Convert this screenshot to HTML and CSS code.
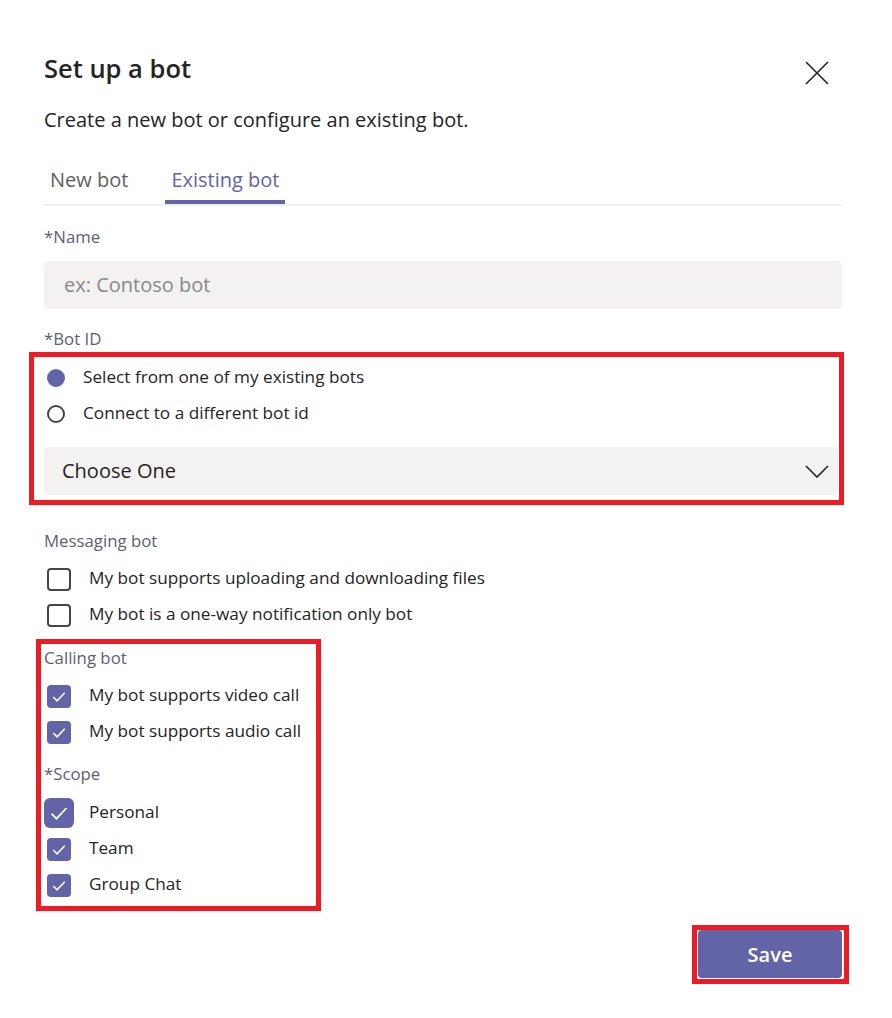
FILE: index.html
```html
<!DOCTYPE html>
<html lang="en">
<head>
<meta charset="utf-8">
<title>Set up a bot</title>
<link rel="stylesheet" href="styles.css">
</head>
<body>
<div class="dialog">
  <div class="header">
    <h1 class="title">Set up a bot</h1>
    <button class="close" aria-label="Close">
      <svg width="24" height="24" viewBox="0 0 24 24"><path d="M1 1 L23 23 M23 1 L1 23" stroke="#252424" stroke-width="1.6" fill="none"/></svg>
    </button>
  </div>
  <p class="subtitle">Create a new bot or configure an existing bot.</p>

  <div class="tabs">
    <div class="tab">New bot</div>
    <div class="tab active">Existing bot</div>
  </div>

  <div class="label label-name">*Name</div>
  <div class="input">ex: Contoso bot</div>

  <div class="label label-botid">*Bot ID</div>
  <div class="mark mark-botid">
    <div class="radio-row">
      <span class="radio checked"></span>
      <span class="radio-text">Select from one of my existing bots</span>
    </div>
    <div class="radio-row">
      <span class="radio"></span>
      <span class="radio-text">Connect to a different bot id</span>
    </div>
    <div class="select">
      <span>Choose One</span>
      <svg width="24" height="13" viewBox="0 0 24 13"><path d="M1 1 L12 12 L23 1" stroke="#252424" stroke-width="1.6" fill="none"/></svg>
    </div>
  </div>

  <div class="label label-msg">Messaging bot</div>
  <div class="checks checks-msg">
    <div class="check-row"><span class="box"></span><span class="check-text">My bot supports uploading and downloading files</span></div>
    <div class="check-row"><span class="box"></span><span class="check-text">My bot is a one-way notification only bot</span></div>
  </div>

  <div class="mark mark-calling">
    <div class="label label-calling">Calling bot</div>
    <div class="checks checks-calling">
      <div class="check-row"><span class="box on"><svg viewBox="0 0 24 24" width="24" height="23"><path d="M6 12.5 L10 16.5 L18 8" stroke="#fff" stroke-width="1.6" fill="none"/></svg></span><span class="check-text">My bot supports video call</span></div>
      <div class="check-row"><span class="box on"><svg viewBox="0 0 24 24" width="24" height="23"><path d="M6 12.5 L10 16.5 L18 8" stroke="#fff" stroke-width="1.6" fill="none"/></svg></span><span class="check-text">My bot supports audio call</span></div>
    </div>
    <div class="label label-scope">*Scope</div>
    <div class="checks checks-scope">
      <div class="check-row"><span class="box on big"><svg viewBox="0 0 24 24" width="30" height="30"><path d="M6 12.5 L10 16.5 L18 8" stroke="#fff" stroke-width="1.4" fill="none"/></svg></span><span class="check-text">Personal</span></div>
      <div class="check-row"><span class="box on"><svg viewBox="0 0 24 24" width="24" height="23"><path d="M6 12.5 L10 16.5 L18 8" stroke="#fff" stroke-width="1.6" fill="none"/></svg></span><span class="check-text">Team</span></div>
      <div class="check-row"><span class="box on"><svg viewBox="0 0 24 24" width="24" height="23"><path d="M6 12.5 L10 16.5 L18 8" stroke="#fff" stroke-width="1.6" fill="none"/></svg></span><span class="check-text">Group Chat</span></div>
    </div>
  </div>

  <div class="footer">
    <div class="mark mark-save">
      <button class="save">Save</button>
    </div>
  </div>
</div>
</body>
</html>
```

FILE: styles.css
```css
* { box-sizing: border-box; }
html, body { margin: 0; padding: 0; background: #ffffff; }
body {
  font-family: "Open Sans", "Noto Sans", "Liberation Sans", sans-serif;
  color: #252424;
}
.dialog {
  width: 892px;
  padding: 52px 50px 0 44px;
}
.header {
  display: flex;
  justify-content: space-between;
  align-items: flex-start;
}
.title {
  margin: 0;
  font-size: 25.5px;
  line-height: 32px;
  font-weight: 600;
  color: #252424;
}
.close {
  border: 0;
  background: none;
  padding: 0;
  margin: 9px 13px 0 0;
  width: 24px;
  height: 24px;
  display: block;
}
.close svg { display: block; }
.subtitle {
  margin: 22px 0 0 0;
  font-size: 20px;
  line-height: 26px;
  color: #252424;
}
.tabs {
  margin-top: 24px;
  display: flex;
  gap: 31px;
  border-bottom: 2px solid #f0f0f0;
}
.tab {
  padding: 10px 6px 7px 6px;
  font-size: 20px;
  line-height: 26px;
  color: #616161;
  border-bottom: 4px solid transparent;
}
.tab.active {
  color: #6264a7;
  border-bottom-color: #6264a7;
}
.label {
  font-size: 16.8px;
  line-height: 22px;
  color: #5d5f6f;
}
.label-name { margin-top: 20px; }
.input {
  margin-top: 13px;
  height: 48px;
  background: #f3f2f1;
  border-radius: 4px;
  padding-left: 20px;
  font-size: 20px;
  line-height: 47px;
  color: #8a8886;
}
.label-botid { margin-top: 19px; }
.mark {
  border: 5px solid #ed1c24;
}
.mark-botid {
  margin: 2px -2px 0 -15px;
  padding: 3px 1px 5px 10px;
}
.radio-row {
  display: flex;
  align-items: center;
  height: 36px;
  padding-left: 3px;
}
.radio {
  width: 18px;
  height: 18px;
  border-radius: 50%;
  border: 2px solid #484644;
  flex: none;
}
.radio.checked {
  background: #6264a7;
  border-color: #6264a7;
}
.radio-text {
  margin-left: 18px;
  padding-bottom: 3px;
  font-size: 17.2px;
  color: #252424;
}
.select {
  margin-top: 15px;
  height: 48px;
  background: #f3f2f1;
  border-radius: 4px;
  display: flex;
  align-items: center;
  justify-content: space-between;
  padding: 0 9px 0 18px;
  font-size: 20px;
  color: #252424;
}
.select span { padding-bottom: 2px; }
.select svg { display: block; }
.label-msg { margin-top: 25px; }
.checks-msg { margin-top: 9px; }
.check-row {
  display: flex;
  align-items: center;
  height: 36px;
  padding-left: 3px;
}
.box {
  width: 24px;
  height: 23px;
  border: 2px solid #484644;
  border-radius: 4px;
  flex: none;
  display: flex;
  align-items: center;
  justify-content: center;
}
.box svg { display: block; flex: none; }
.box.on {
  background: #6264a7;
  border: 0;
}
.box.big {
  width: 30px;
  height: 30px;
  margin-left: -3px;
  margin-right: -3px;
  border-radius: 6px;
}
.check-text {
  margin-left: 18px;
  padding-bottom: 3px;
  font-size: 17.2px;
  color: #252424;
}
.mark-calling {
  width: 285px;
  margin: 6px 0 0 -8px;
  padding: 3px 0 3px 3px;
}
.checks-calling { margin-top: 9px; }
.label-scope { margin-top: 13px; }
.checks-scope { margin-top: 10px; }
.footer {
  margin-top: 14px;
  display: flex;
  justify-content: flex-end;
  padding-right: 0;
  margin-right: -7px;
}
.mark-save {
  padding: 0 2px 1px 1px;
}
.save {
  display: block;
  width: 144px;
  height: 48px;
  border: 0;
  border-radius: 4px;
  background: #6264a7;
  color: #ffffff;
  font-family: inherit;
  font-size: 20px;
  font-weight: 600;
}
```
